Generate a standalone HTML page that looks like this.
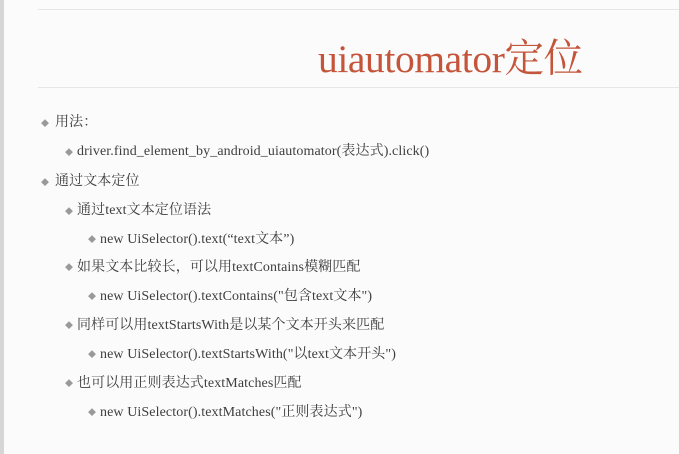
<!DOCTYPE html>
<html><head><meta charset="utf-8"><style>
body{margin:0;width:679px;height:454px;background:#fbfbfb;position:relative;overflow:hidden;font-family:"Liberation Serif","Noto Serif CJK SC",serif;color:#3e3e3e}
.edge{position:absolute;left:0;top:0;width:4px;height:454px;background:#d6d6d6}
.hl{position:absolute;left:38px;right:0;height:1px;background:#e6e6e6}
.t{position:absolute;left:318px;top:28px;font-size:39.5px;color:#c4553a;white-space:nowrap;letter-spacing:-0.4px}
.r{position:absolute;font-size:14px;white-space:nowrap;line-height:16px;letter-spacing:0.1px}
.b{position:absolute;font-size:8px;color:#999;line-height:16px}
</style></head><body>
<div class="edge"></div>
<div class="hl" style="top:9px"></div>
<div class="hl" style="top:87px"></div>
<div class="t">uiautomator定位</div>

<div class="b" style="left:41px;top:116px">◆</div><div class="r" style="left:55px;top:115px">用法：</div>
<div class="b" style="left:65px;top:145px">◆</div><div class="r" style="left:77px;top:144px">driver.find_element_by_android_uiautomator(表达式).click()</div>
<div class="b" style="left:41px;top:175px">◆</div><div class="r" style="left:55px;top:174px">通过文本定位</div>
<div class="b" style="left:65px;top:204px">◆</div><div class="r" style="left:77px;top:203px">通过text文本定位语法</div>
<div class="b" style="left:88px;top:232px">◆</div><div class="r" style="left:100px;top:232px">new UiSelector().text(“text文本”)</div>
<div class="b" style="left:65px;top:260px">◆</div><div class="r" style="left:77px;top:260px">如果文本比较长，可以用textContains模糊匹配</div>
<div class="b" style="left:88px;top:289px">◆</div><div class="r" style="left:100px;top:289px">new UiSelector().textContains("包含text文本")</div>
<div class="b" style="left:65px;top:318px">◆</div><div class="r" style="left:77px;top:318px">同样可以用textStartsWith是以某个文本开头来匹配</div>
<div class="b" style="left:88px;top:347px">◆</div><div class="r" style="left:100px;top:347px">new UiSelector().textStartsWith("以text文本开头")</div>
<div class="b" style="left:65px;top:376px">◆</div><div class="r" style="left:77px;top:376px">也可以用正则表达式textMatches匹配</div>
<div class="b" style="left:88px;top:405px">◆</div><div class="r" style="left:100px;top:405px">new UiSelector().textMatches("正则表达式")</div>
</body></html>
